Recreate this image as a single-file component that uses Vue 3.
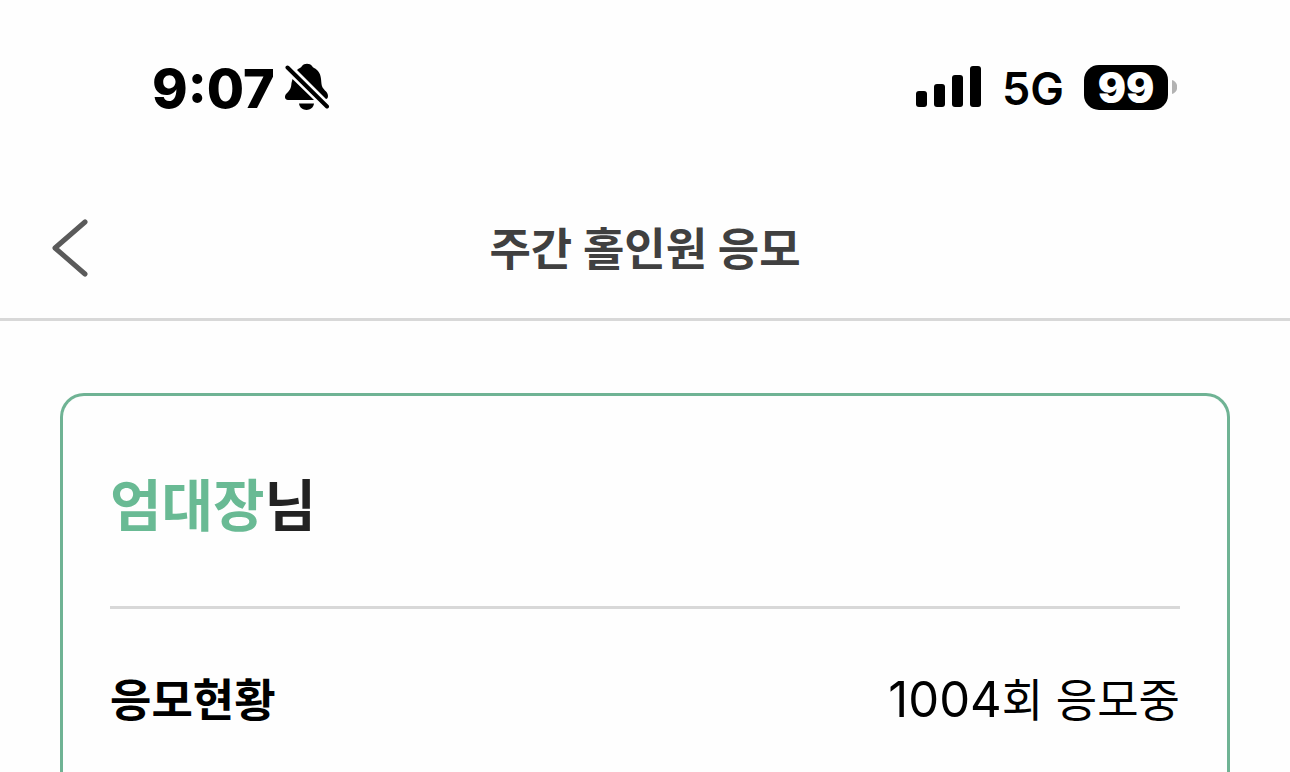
<script setup>
import { ref } from 'vue'

const time = ref('9:07')
const battery = ref(99)
const member = ref('엄대장')
const entries = ref(1004)

function goBack() {
  window.history.back()
}
</script>

<template>
  <div class="page">
    <div class="status">
      <div class="status-left">
        <span class="time">{{ time }}</span>
        <svg class="bell" viewBox="0 0 46 48" role="img" aria-label="무음">
          <path d="M12 7C14 5 16 5 17 3C19 0 25 0 27 3C28 5 30 5 32 7C36 11 36 15 36.500 21C37 27 43 28 43 33C43 35 42 36 41 36L12 7Z" />
          <path d="M7.500 16L29 37H3C0 37 -1 34 1 31C5 27 6 26 6.500 20Z" />
          <path d="M14 40.500H29C28 49 15 49 14 40.500Z" />
          <path class="slash" d="M2.500 4.500L42 43.500" />
        </svg>
      </div>
      <div class="status-right">
        <svg class="signal" viewBox="0 0 66 42" role="img" aria-label="신호 세기">
          <rect x="0" y="25" width="11" height="16" rx="3" />
          <rect x="18" y="18" width="11" height="23" rx="3" />
          <rect x="36" y="9" width="11" height="32" rx="3" />
          <rect x="54" y="0" width="11" height="41" rx="3" />
        </svg>
        <span class="network">5G</span>
        <div class="battery">
          <span class="battery-level">{{ battery }}</span>
          <svg class="battery-cap" viewBox="0 0 5 14" aria-hidden="true">
            <path d="M0 0C7 2 7 12 0 14Z" />
          </svg>
        </div>
      </div>
    </div>

    <header class="header">
      <button class="back" type="button" aria-label="뒤로" @click="goBack">
        <svg viewBox="0 0 38 58" aria-hidden="true">
          <path d="M35 3L5 29L35 55" />
        </svg>
      </button>
      <h1 class="title">주간 홀인원 응모</h1>
    </header>

    <main class="content">
      <section class="card">
        <h2 class="name"><span class="member">{{ member }}</span>님</h2>
        <dl class="row">
          <dt>응모현황</dt>
          <dd><span class="count">{{ entries }}</span>회 응모중</dd>
        </dl>
      </section>
    </main>
  </div>
</template>

<style>
body {
  margin: 0;
  background: #fefefe;
}
</style>

<style scoped>
.page {
  box-sizing: border-box;
  min-height: 100vh;
  display: flex;
  flex-direction: column;
  background: #fefefe;
  color: #000;
  font-family: Inter, "Noto Sans CJK KR", sans-serif;
}

.status {
  display: flex;
  align-items: center;
  justify-content: space-between;
  height: 174px;
  padding: 0 113px 0 152px;
}

.status-left,
.status-right {
  display: flex;
  align-items: center;
}

.status-left {
  gap: 10px;
}

.time {
  padding-top: 4px;
  font-size: 54px;
  line-height: 60px;
  font-weight: 800;
}

.bell {
  width: 46px;
  height: 48px;
}

.slash {
  fill: none;
  stroke: #000;
  stroke-width: 4;
  stroke-linecap: round;
}

.signal {
  width: 66px;
  height: 42px;
}

.network {
  margin: 0 20px;
  padding-top: 4px;
  font-size: 45px;
  line-height: 60px;
  font-weight: 600;
}

.battery {
  display: flex;
  align-items: center;
  gap: 4px;
}

.battery-level {
  box-sizing: border-box;
  width: 84px;
  border-radius: 15px;
  background: #000;
  color: #fff;
  font-size: 42px;
  line-height: 45px;
  font-weight: 900;
  text-align: center;
}

.battery-cap {
  width: 5px;
  height: 14px;
  fill: #b3b3b3;
}

.header {
  display: grid;
  grid-template-columns: 88px 1fr 88px;
  align-items: center;
  height: 144px;
  border-bottom: 3px solid #d8d8d8;
}

.back {
  display: flex;
  justify-content: flex-end;
  padding: 4px 0 0;
  border: 0;
  background: none;
  cursor: pointer;
}

.back svg {
  width: 38px;
  height: 58px;
  fill: none;
  stroke: #5a5a5a;
  stroke-width: 5;
  stroke-linecap: round;
  stroke-linejoin: round;
}

.title {
  margin: 0;
  padding-top: 8px;
  color: #404040;
  font-size: 45px;
  line-height: 66px;
  font-weight: 700;
  text-align: center;
}

.content {
  flex: 1;
  display: flex;
  padding: 72px 60px 0;
}

.card {
  flex: 1;
  padding: 68px 47px 0;
  border: 3px solid #6fb394;
  border-bottom: 0;
  border-radius: 24px 24px 0 0;
}

.name {
  margin: 0;
  padding-bottom: 58px;
  border-bottom: 3px solid #d8d8d8;
  color: #232323;
  font-size: 56px;
  line-height: 84px;
  font-weight: 700;
}

.member {
  color: #69ba94;
}

.row {
  display: flex;
  align-items: center;
  justify-content: space-between;
  margin: 0;
  padding: 58px 0 36px;
  font-size: 45px;
  line-height: 66px;
}

.row dt {
  font-weight: 700;
}

.row dd {
  margin: 0;
}

.count {
  font-size: 49px;
}
</style>
